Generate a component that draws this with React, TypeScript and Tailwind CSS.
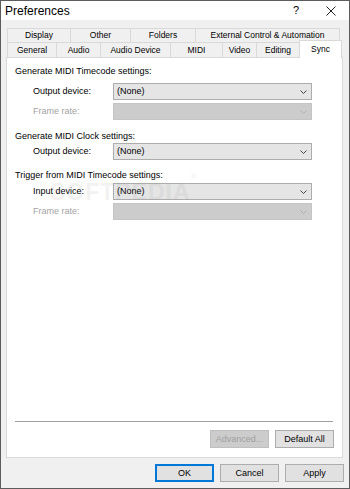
import React from "react";

const font = { fontFamily: '"Liberation Sans", Arial, sans-serif' };

function Chevron({ disabled }: { disabled?: boolean }) {
  return (
    <svg width="7" height="4" viewBox="0 0 7 4" className="shrink-0">
      <path d="M0.5 0.5 L3.5 3.5 L6.5 0.5" fill="none" stroke={disabled ? "#b0b0b0" : "#444"} strokeWidth="1" />
    </svg>
  );
}

function Combo({ value, disabled }: { value?: string; disabled?: boolean }) {
  return (
    <div
      className={
        "w-[199px] h-[17px] flex items-center justify-between pl-[3px] pr-[4px] border " +
        (disabled ? "bg-[#cccccc] border-[#c4c4c4]" : "bg-[#e5e5e5] border-[#adadad]")
      }
    >
      <span className="text-[9px] text-black leading-none">{value ?? ""}</span>
      <Chevron disabled={disabled} />
    </div>
  );
}

function Row({ label, value, disabled, mt }: { label: string; value?: string; disabled?: boolean; mt: string }) {
  return (
    <div className={"flex items-center " + mt}>
      <span className={"w-[80px] pl-[26px] box-content text-[9px] leading-none " + (disabled ? "text-[#a3a3a3]" : "text-black")}>
        {label}
      </span>
      <Combo value={value} disabled={disabled} />
    </div>
  );
}

function Tab({ label, w, last }: { label: string; w: string; last?: boolean }) {
  return (
    <div
      className={
        "h-full flex items-center justify-center border-l border-t border-[#d9d9d9] bg-[#f0f0f0] text-[8.5px] leading-none text-black " +
        w +
        (last ? " border-r" : "")
      }
    >
      {label}
    </div>
  );
}

function Btn({ label, w, disabled, def }: { label: string; w: string; disabled?: boolean; def?: boolean }) {
  return (
    <div
      className={
        "h-[18px] flex items-center justify-center text-[9px] leading-none border " +
        w +
        (disabled
          ? " bg-[#cccccc] border-[#bfbfbf] text-[#a0a0a0]"
          : def
          ? " bg-[#e1e1e1] border-[#0078d7] shadow-[inset_0_0_0_1px_#0078d7] text-black"
          : " bg-[#e1e1e1] border-[#adadad] text-black")
      }
    >
      {label}
    </div>
  );
}

export default function App() {
  return (
    <div style={font} className="w-[350px] h-[489px] border border-[#5c5c5c] bg-[#f0f0f0] flex flex-col overflow-hidden">
      {/* Title bar */}
      <div className="h-[19px] bg-white flex items-center shrink-0">
        <span className="ml-[4px] text-[12px] leading-none text-black">Preferences</span>
        <span className="ml-auto mr-[27px] text-[11px] leading-none text-black">?</span>
        <svg width="10" height="10" viewBox="0 0 10 10" className="mr-[13px]">
          <path d="M0.5 0.5 L9.5 9.5 M9.5 0.5 L0.5 9.5" stroke="#222" strokeWidth="1" />
        </svg>
      </div>

      <div className="flex flex-col pl-[5px] pt-[8px]">
        {/* Tabs */}
        <div className="ml-[1px] flex h-[14px]">
          <Tab label="Display" w="w-[63px]" />
          <Tab label="Other" w="w-[60px]" />
          <Tab label="Folders" w="w-[65px]" />
          <Tab label="External Control & Automation" w="w-[145px]" last />
        </div>
        <div className="ml-[1px] flex h-[15px] items-end relative z-10">
          <Tab label="General" w="w-[49px]" />
          <Tab label="Audio" w="w-[44px]" />
          <Tab label="Audio Device" w="w-[70px]" />
          <Tab label="MIDI" w="w-[52px]" />
          <Tab label="Video" w="w-[34px]" />
          <Tab label="Editing" w="w-[43px]" />
          <div className="w-[43px] h-[18px] -mb-px self-end flex items-start justify-center pt-[4px] bg-white border border-b-0 border-[#d9d9d9] text-[8.5px] leading-none text-black">
            Sync
          </div>
        </div>

        {/* Panel */}
        <div className="relative w-[337px] h-[401px] bg-white border border-[#d9d9d9] flex flex-col">
          <div className="mt-[7px] ml-[8px] h-[13px] flex items-center text-[9px] leading-none text-black">
            Generate MIDI Timecode settings:
          </div>
          <Row label="Output device:" value="(None)" mt="mt-[5px]" />
          <Row label="Frame rate:" disabled mt="mt-[3px]" />
          <div className="mt-[9px] ml-[8px] h-[14px] flex items-center text-[9px] leading-none text-black">
            Generate MIDI Clock settings:
          </div>
          <Row label="Output device:" value="(None)" mt="mt-0" />
          <div className="mt-[8px] ml-[8px] h-[14px] flex items-center text-[9px] leading-none text-black">
            Trigger from MIDI Timecode settings:
          </div>
          <Row label="Input device:" value="(None)" mt="mt-px" />
          <Row label="Frame rate:" disabled mt="mt-[3px]" />

          <div className="mt-auto ml-[8px] w-[318px] h-px bg-[#a0a0a0]" />
          <div className="mt-[8px] mb-[9px] flex justify-end gap-[6px] pr-[8px]">
            <Btn label="Advanced..." w="w-[59px]" disabled />
            <Btn label="Default All" w="w-[59px]" />
          </div>

          {/* watermark */}
          <div className="absolute left-[43px] top-[123px] text-[23px] font-bold tracking-[1px] text-[#9a9a9a] opacity-[0.12] pointer-events-none leading-none">
            SOFTPEDIA<sup className="text-[8px] align-top">®</sup>
          </div>
        </div>

        {/* Bottom buttons */}
        <div className="mt-[6px] flex justify-end gap-[6px] pr-[5px]">
          <Btn label="OK" w="w-[59px]" def />
          <Btn label="Cancel" w="w-[59px]" />
          <Btn label="Apply" w="w-[59px]" />
        </div>
      </div>
    </div>
  );
}
